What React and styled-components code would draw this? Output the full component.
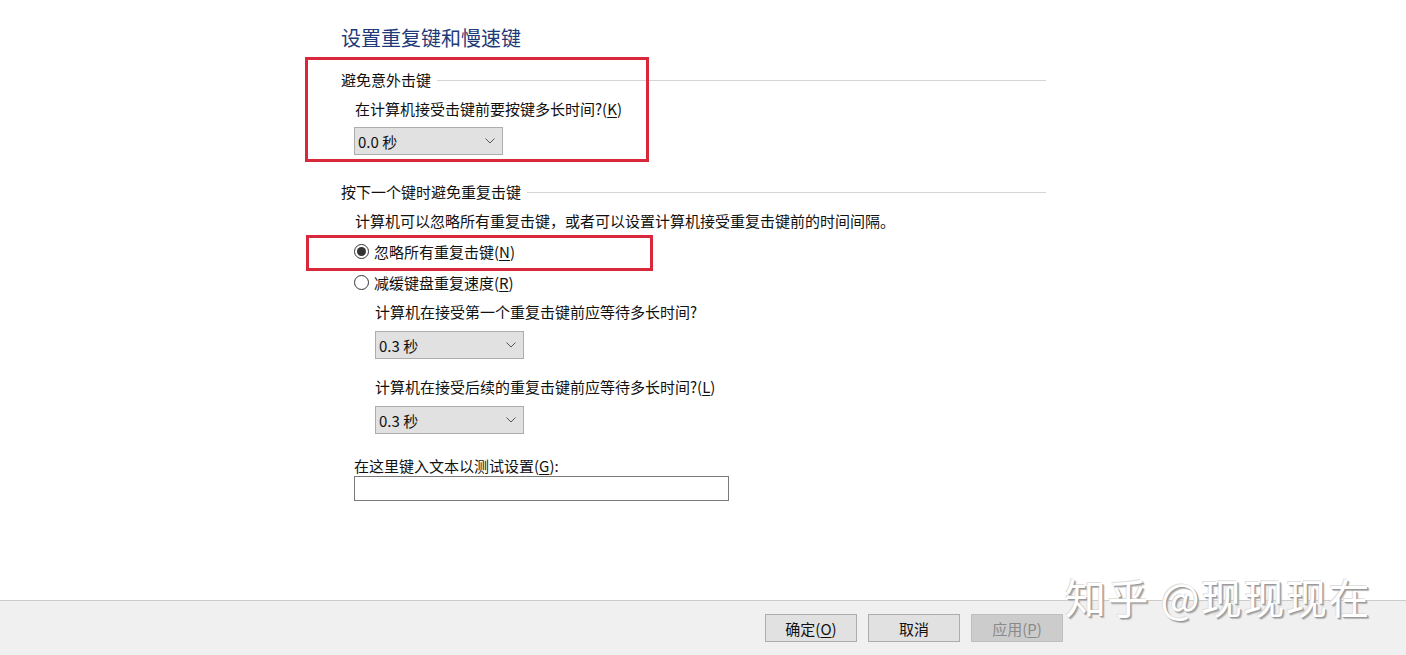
import React from "react";
import styled, { createGlobalStyle } from "styled-components";

const Global = createGlobalStyle`
  html, body { margin: 0; padding: 0; background: #fff; }
  body {
    font-family: "Noto Sans", "Noto Sans CJK SC", sans-serif;
    color: #111;
    overflow: hidden;
  }
`;

const Page = styled.div`
  position: relative;
  width: 1406px;
  height: 655px;
  display: flex;
  flex-direction: column;
  background: #fff;
`;

const Content = styled.div`
  flex: 1;
  padding: 24px 0 0 341px;
  width: 705px;
  display: flex;
  flex-direction: column;
  align-items: flex-start;
`;

const Title = styled.h1`
  margin: 0;
  font-family: "Noto Sans CJK SC", sans-serif;
  font-weight: 400;
  font-size: 20px;
  line-height: 28px;
  color: #1e3a78;
`;

const GroupHeader = styled.div`
  align-self: stretch;
  display: flex;
  align-items: center;
  gap: 6px;
  margin-top: ${(p) => p.$mt}px;
  font-family: "Noto Sans CJK SC", sans-serif;
  font-size: 15px;
  line-height: 20px;
  &::after {
    content: "";
    flex: 1;
    height: 1px;
    background: #d4d4d4;
  }
`;

const Text = styled.div`
  margin-top: ${(p) => p.$mt || 0}px;
  margin-left: ${(p) => p.$ml || 0}px;
  font-family: "Noto Sans CJK SC", sans-serif;
  font-size: 15px;
  line-height: 20px;
  white-space: nowrap;
`;

const U = styled.span`
  text-decoration: underline;
  text-underline-offset: 2px;
`;

const Select = styled.div`
  box-sizing: border-box;
  margin-top: ${(p) => p.$mt}px;
  margin-left: ${(p) => p.$ml || 0}px;
  width: 149px;
  height: 28px;
  background: #e1e1e1;
  border: 1px solid #adadad;
  display: flex;
  align-items: center;
  justify-content: space-between;
  padding: 0 7px 0 3px;
  font-family: "Noto Sans CJK SC", sans-serif;
  font-size: 15px;
  color: #111;
`;

const RadioRow = styled.label`
  display: flex;
  align-items: center;
  gap: 5px;
  margin-top: ${(p) => p.$mt}px;
  margin-left: 13px;
  height: 20px;
  font-family: "Noto Sans CJK SC", sans-serif;
  font-size: 15px;
`;

const RadioCircle = styled.span`
  box-sizing: border-box;
  width: 15px;
  height: 15px;
  border-radius: 50%;
  border: 1px solid #333;
  background: #fff;
  display: flex;
  align-items: center;
  justify-content: center;
  &::after {
    content: "";
    width: 9px;
    height: 9px;
    border-radius: 50%;
    background: ${(p) => (p.$checked ? "#333" : "transparent")};
  }
`;

const TextBox = styled.div`
  box-sizing: border-box;
  margin-left: 13px;
  width: 375px;
  height: 25px;
  border: 1px solid #7a7a7a;
  background: #fff;
`;

const Footer = styled.div`
  height: 55px;
  box-sizing: border-box;
  border-top: 1px solid #cccccc;
  background: #f0f0f0;
  display: flex;
  justify-content: flex-end;
  align-items: flex-start;
  gap: 11px;
  padding: 13px 343px 0 0;
`;

const Button = styled.div`
  box-sizing: border-box;
  width: 92px;
  height: 28px;
  display: flex;
  align-items: center;
  justify-content: center;
  background: ${(p) => (p.$disabled ? "#cccccc" : "#e1e1e1")};
  border: 1px solid ${(p) => (p.$disabled ? "#bfbfbf" : "#adadad")};
  color: ${(p) => (p.$disabled ? "#8a8a8a" : "#111")};
  font-family: "Noto Sans CJK SC", sans-serif;
  font-size: 15px;
`;

const Highlight = styled.div`
  position: absolute;
  box-sizing: border-box;
  border: 3px solid #d8283a;
  left: ${(p) => p.$x}px;
  top: ${(p) => p.$y}px;
  width: ${(p) => p.$w}px;
  height: ${(p) => p.$h}px;
  pointer-events: none;
`;

const Watermark = styled.div`
  position: absolute;
  left: 1065px;
  top: 571px;
  font-family: "Noto Sans CJK SC", sans-serif;
  font-size: 41px;
  line-height: 50px;
  color: #ffffff;
  letter-spacing: 1.5px;
  text-shadow: 1px 1px 0 #9a9a9a, 2px 2px 1px #b5b5b5, -1px -1px 0 #e0e0e0;
  white-space: nowrap;
  pointer-events: none;
`;

const Chevron = () => (
  <svg width="10" height="6" viewBox="0 0 10 6">
    <path d="M0.5 0.5 L5 5 L9.5 0.5" fill="none" stroke="#555" strokeWidth="1" />
  </svg>
);

export default function App() {
  return (
    <>
      <Global />
      <Page>
        <Content>
          <Title>设置重复键和慢速键</Title>
          <GroupHeader $mt={18}>避免意外击键</GroupHeader>
          <Text $mt={9} $ml={14}>
            在计算机接受击键前要按键多长时间?(<U>K</U>)
          </Text>
          <Select $mt={8} $ml={13}>
            <span>0.0 秒</span>
            <Chevron />
          </Select>
          <GroupHeader $mt={27}>按下一个键时避免重复击键</GroupHeader>
          <Text $mt={9} $ml={14}>
            计算机可以忽略所有重复击键，或者可以设置计算机接受重复击键前的时间间隔。
          </Text>
          <RadioRow $mt={10}>
            <RadioCircle $checked />
            <span>
              忽略所有重复击键(<U>N</U>)
            </span>
          </RadioRow>
          <RadioRow $mt={11}>
            <RadioCircle />
            <span>
              减缓键盘重复速度(<U>R</U>)
            </span>
          </RadioRow>
          <Text $mt={10} $ml={34}>
            计算机在接受第一个重复击键前应等待多长时间?
          </Text>
          <Select $mt={9} $ml={34}>
            <span>0.3 秒</span>
            <Chevron />
          </Select>
          <Text $mt={18} $ml={34}>
            计算机在接受后续的重复击键前应等待多长时间?(<U>L</U>)
          </Text>
          <Select $mt={9} $ml={34}>
            <span>0.3 秒</span>
            <Chevron />
          </Select>
          <Text $mt={22} $ml={13}>
            在这里键入文本以测试设置(<U>G</U>):
          </Text>
          <TextBox />
        </Content>
        <Footer>
          <Button>
            确定(<U>O</U>)
          </Button>
          <Button>取消</Button>
          <Button $disabled>
            应用(<U>P</U>)
          </Button>
        </Footer>
        <Highlight $x={305} $y={57} $w={344} $h={105} />
        <Highlight $x={306} $y={235} $w={347} $h={36} />
        <Watermark>知乎 @现现现在</Watermark>
      </Page>
    </>
  );
}
